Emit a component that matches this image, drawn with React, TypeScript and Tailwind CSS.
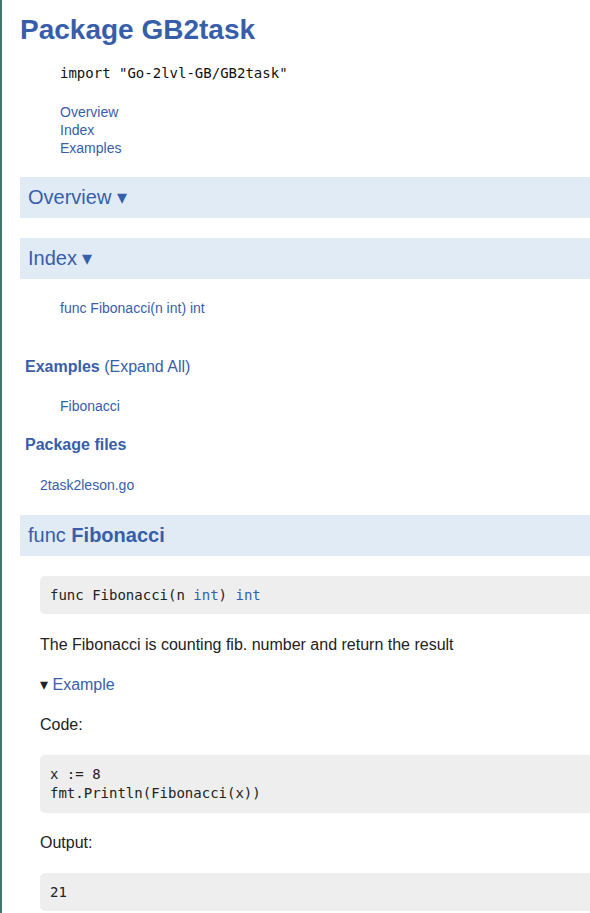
import React from "react";

const sans = { fontFamily: '"Liberation Sans", Arial, sans-serif' };

function Link({ children, className = "" }: { children: React.ReactNode; className?: string }) {
  return <a className={`text-[#375EAB] no-underline ${className}`}>{children}</a>;
}

export default function App() {
  return (
    <div
      className="min-h-[913px] w-[590px] overflow-hidden border-l-2 border-[#3f7772] bg-white pl-[18px] text-[#222222] font-['Liberation_Sans',Arial,sans-serif]"
      style={sans}
    >
      <h1 className="mt-[14px] text-[28px] font-bold leading-[32px] text-[#375EAB]">Package GB2task</h1>

      <div className="mt-[18px] pl-[40px] font-['DejaVu_Sans_Mono',monospace] text-[14px] leading-[18px] text-[#111]">
        import "Go-2lvl-GB/GB2task"
      </div>

      <div className="mt-[21px] flex flex-col pl-[40px] text-[14px] leading-[18px]">
        <Link>Overview</Link>
        <Link>Index</Link>
        <Link>Examples</Link>
      </div>

      <div className="mt-[20px] bg-[#E0EBF5] py-[8px] pl-[8px] text-[20px] leading-[25px] text-[#375EAB]">Overview ▾</div>
      <div className="mt-[20px] bg-[#E0EBF5] py-[8px] pl-[8px] text-[20px] leading-[25px] text-[#375EAB]">Index ▾</div>

      <div className="mt-[20px] pl-[40px] text-[14px] leading-[18px]">
        <Link>func Fibonacci(n int) int</Link>
      </div>

      <div className="mt-[40px] pl-[5px] text-[16px] leading-[20px] text-[#375EAB]">
        <span className="font-bold">Examples</span> <span>(Expand All)</span>
      </div>

      <div className="mt-[20px] pl-[40px] text-[14px] leading-[18px]">
        <Link>Fibonacci</Link>
      </div>

      <div className="mt-[20px] pl-[5px] text-[16px] font-bold leading-[20px] text-[#375EAB]">Package files</div>

      <div className="mt-[21px] pl-[20px] text-[14px] leading-[18px]">
        <Link>2task2leson.go</Link>
      </div>

      <div className="mt-[21px] bg-[#E0EBF5] py-[8px] pl-[8px] text-[20px] leading-[25px] text-[#375EAB]">
        func <span className="font-bold">Fibonacci</span>
      </div>

      <div className="pl-[20px]">
        <pre className="mt-[20px] rounded-l-[5px] bg-[#EEEEEE] pt-[10px] pb-[9px] pl-[10px] font-['DejaVu_Sans_Mono',monospace] text-[14px] leading-[19px] text-[#222]">
          func Fibonacci(n <span className="text-[#375EAB]">int</span>) <span className="text-[#375EAB]">int</span>
        </pre>

        <p className="mt-[21px] text-[16px] leading-[20px]">The Fibonacci is counting fib. number and return the result</p>

        <div className="mt-[20px] text-[16px] leading-[20px]">
          <span className="text-[#222]">▾ </span>
          <Link>Example</Link>
        </div>

        <p className="mt-[20px] text-[16px] leading-[20px]">Code:</p>

        <pre className="mt-[20px] rounded-l-[5px] bg-[#EEEEEE] pt-[10px] pb-[10px] pl-[10px] font-['DejaVu_Sans_Mono',monospace] text-[14px] leading-[19px] text-[#222]">
{`x := 8
fmt.Println(Fibonacci(x))`}
        </pre>

        <p className="mt-[20px] text-[16px] leading-[20px]">Output:</p>

        <pre className="mt-[20px] rounded-l-[5px] bg-[#EEEEEE] pt-[10px] pb-[9px] pl-[10px] font-['DejaVu_Sans_Mono',monospace] text-[14px] leading-[19px] text-[#222]">
          21
        </pre>
      </div>
    </div>
  );
}
